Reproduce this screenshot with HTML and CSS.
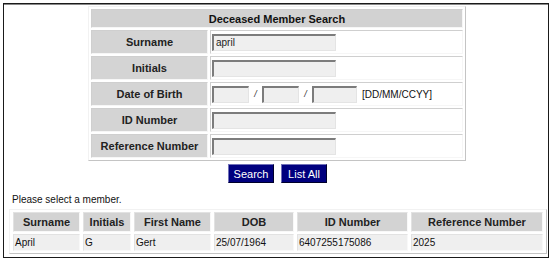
FILE: index.html
```html
<!DOCTYPE html>
<html>
<head>
<meta charset="utf-8">
<link rel="stylesheet" href="styles.css">
</head>
<body>
<div class="frame">
  <table class="search">
    <tr><th colspan="2" class="title">Deceased Member Search</th></tr>
    <tr><th class="label">Surname</th><td class="value"><span class="field w124">april</span></td></tr>
    <tr><th class="label">Initials</th><td class="value"><span class="field w124"></span></td></tr>
    <tr><th class="label">Date of Birth</th><td class="value"><span class="field w37"></span><span class="sep">/</span><span class="field w37"></span><span class="sep">/</span><span class="field w45"></span><span class="hint">[DD/MM/CCYY]</span></td></tr>
    <tr><th class="label">ID Number</th><td class="value"><span class="field w124"></span></td></tr>
    <tr><th class="label">Reference Number</th><td class="value"><span class="field w124"></span></td></tr>
  </table>
  <div class="buttons">
    <button class="btn">Search</button>
    <button class="btn">List All</button>
  </div>
  <p class="prompt">Please select a member.</p>
  <table class="results">
    <colgroup>
      <col class="c1"><col class="c2"><col class="c3"><col class="c4"><col class="c5"><col class="c6">
    </colgroup>
    <tr class="head"><th>Surname</th><th>Initials</th><th>First Name</th><th>DOB</th><th>ID Number</th><th>Reference Number</th></tr>
    <tr class="row"><td>April</td><td>G</td><td>Gert</td><td>25/07/1964</td><td>6407255175086</td><td>2025</td></tr>
  </table>
</div>
</body>
</html>
```
FILE: styles.css
```css
html, body {
  margin: 0;
  padding: 0;
  background: #fff;
}
body {
  font-family: "Liberation Sans", Arial, sans-serif;
  font-size: 10px;
  color: #111;
}
.frame {
  margin: 3px 0 0 3px;
  width: 544px;
  height: 253px;
  border: 1px solid #1a1a1a;
  box-shadow: inset 0 1px 0 #888;
  box-sizing: content-box;
}
.search {
  margin: 2px auto 0 auto;
  position: relative;
  left: 1px;
  border-collapse: separate;
  border-spacing: 2px;
  border: 1px solid;
  border-color: #f2f2f2 #c4c4c4 #c4c4c4 #f2f2f2;
}
.search th, .search td {
  padding: 0;
  border: 1px solid;
  border-color: #cfcfcf #f6f6f6 #f6f6f6 #cfcfcf;
}
.title {
  height: 17px;
  background: #d2d2d2;
  font-size: 11px;
  font-weight: bold;
  text-align: center;
  width: 369px;
}
.label {
  width: 115px;
  height: 22px;
  background: #d4d4d4;
  font-size: 11px;
  font-weight: bold;
  text-align: center;
  color: #222;
}
.value {
  width: 250px;
  background: #fff;
  padding-left: 1px !important;
  white-space: nowrap;
}
.field {
  display: inline-block;
  vertical-align: middle;
  height: 14px;
  line-height: 14px;
  box-sizing: content-box;
  border-style: solid;
  border-width: 2px 1px 1px 2px;
  border-color: #7c7c7c #e4e4e4 #e4e4e4 #7c7c7c;
  background: #efefef;
  padding: 0 2px;
  font-size: 10px;
  color: #222;
}
.w124 { width: 117px; }
.w37 { width: 30px; }
.w45 { width: 38px; }
.sep {
  display: inline-block;
  vertical-align: middle;
  width: 13px;
  text-align: center;
  font-size: 9px;
  font-style: italic;
  color: #333;
}
.hint {
  display: inline-block;
  vertical-align: middle;
  margin-left: 5px;
  font-size: 10px;
}
.buttons {
  display: flex;
  justify-content: center;
  gap: 7px;
  margin-top: 3px;
  padding-left: 3px;
}
.btn {
  width: 46px;
  height: 19px;
  padding: 0;
  margin: 0;
  background: #00007e;
  color: #fff;
  font-family: "Liberation Sans", Arial, sans-serif;
  font-size: 11px;
  border: 1px solid;
  border-color: #7070b8 #00002a #00002a #7070b8;
}
.prompt {
  margin: 11px 0 0 8px;
  line-height: 12px;
  font-size: 10px;
}
.results {
  margin: 3px 0 0 5px;
  table-layout: fixed;
  border-collapse: separate;
  border-spacing: 3px 2px;
  border: 1px solid;
  border-color: #f2f2f2 #c4c4c4 #c4c4c4 #f2f2f2;
}
.c1 { width: 67px; }
.c2 { width: 48px; }
.c3 { width: 77px; }
.c4 { width: 80px; }
.c5 { width: 111px; }
.c6 { width: 132px; }
.results th, .results td {
  border: 1px solid;
  border-color: #e2e2e2 #f8f8f8 #f8f8f8 #e2e2e2;
}
.results th {
  height: 18px;
  padding: 0;
  background: #d3d3d3;
  font-size: 11px;
  font-weight: bold;
  text-align: center;
  color: #222;
}
.results td {
  height: 15px;
  padding: 0 0 0 1px;
  background: #efefef;
  font-size: 10px;
  text-align: left;
}
```
